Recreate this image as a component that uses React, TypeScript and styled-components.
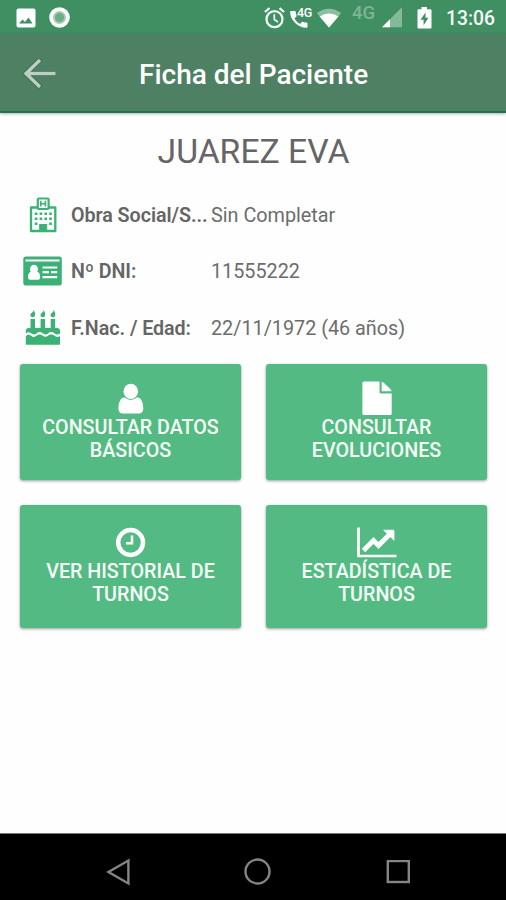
import React from 'react';
import styled, { createGlobalStyle } from 'styled-components';

const GlobalStyle = createGlobalStyle`
  * { box-sizing: border-box; }
  body { margin: 0; background: #fff; font-family: Roboto, "Liberation Sans", sans-serif; }
  svg { display: block; flex: none; }
`;

const Screen = styled.div`
  width: 506px;
  height: 900px;
  display: flex;
  flex-direction: column;
  background: #fefefe;
  overflow: hidden;
`;

const StatusBar = styled.div`
  height: 34px;
  flex: none;
  display: flex;
  align-items: center;
  justify-content: space-between;
  padding: 1px 11px 0 16px;
  background: #3f8f63;
`;

const StatusGroup = styled.div`
  display: flex;
  align-items: center;
`;

const StatusIcon = styled.svg<{ $gap?: number }>`
  margin-left: ${(p) => p.$gap ?? 0}px;
`;

const Network = styled.span`
  width: 24px;
  margin: -9px 0 0 10px;
  font-size: 18.5px;
  line-height: 20px;
  font-weight: 500;
  color: #7db595;
`;

const Clock = styled.span`
  width: 49px;
  margin-left: 14px;
  padding-top: 2px;
  font-size: 19.3px;
  line-height: 24px;
  font-weight: 500;
  white-space: nowrap;
  color: #f4faf6;
`;

const Toolbar = styled.header`
  height: 79px;
  flex: none;
  display: grid;
  grid-template-columns: 139px 1fr;
  align-items: center;
  padding-top: 2px;
  background: #4e8063;
  border-bottom: 2px solid #28704f;
  box-shadow: 0 1px 3px rgba(0, 0, 0, 0.3);
`;

const BackButton = styled.button`
  width: 40px;
  height: 40px;
  margin-left: 20px;
  padding: 0;
  display: grid;
  place-items: center;
  border: 0;
  background: none;
`;

const Title = styled.h1`
  margin: 0;
  padding-top: 2px;
  font-size: 28px;
  line-height: 34px;
  font-weight: 500;
  white-space: nowrap;
  color: #fff;
`;

const Content = styled.main`
  flex: 1;
  padding: 20px 19px 0 20px;
`;

const PatientName = styled.h2`
  margin: 0;
  height: 54px;
  font-size: 33.7px;
  line-height: 38px;
  font-weight: 400;
  text-align: center;
  white-space: nowrap;
  color: #656565;
`;

const Row = styled.div`
  height: 56.3px;
  display: grid;
  grid-template-columns: 45px 136px 1fr;
  column-gap: 5px;
  align-items: center;
`;

const RowIcon = styled.div`
  display: grid;
  place-items: center;
  color: #3cb175;
`;

const Label = styled.span`
  padding: 2px 0 0 1px;
  white-space: nowrap;
  font-size: 19.7px;
  line-height: 26px;
  font-weight: 600;
  letter-spacing: -0.05px;
  color: #656565;
`;

const Value = styled.span`
  padding-top: 2px;
  font-size: 19.8px;
  line-height: 26px;
  white-space: nowrap;
  color: #6c6c6c;
`;

const Actions = styled.div`
  margin-top: 8px;
  display: grid;
  grid-template-columns: 221px 221px;
  grid-template-rows: 116px 123px;
  gap: 25px;
`;

const ActionButton = styled.button<{ $top: number }>`
  padding: ${(p) => p.$top}px 10px 0;
  display: flex;
  flex-direction: column;
  align-items: center;
  justify-content: flex-start;
  border: 0;
  border-radius: 3px;
  background: #54ba83;
  box-shadow: 0 1px 3px rgba(0, 0, 0, 0.4);
  color: #f6fff6;
  font-family: inherit;
  font-size: 19.7px;
  line-height: 23px;
  font-weight: 500;
`;

const NavBar = styled.nav`
  height: 67px;
  flex: none;
  display: flex;
  align-items: center;
  justify-content: space-between;
  padding: 10px 96px 0 106px;
  background: #000;
  border-top: 1px solid #777;
`;

const ImageIcon = () => (
  <StatusIcon width="20" height="20" viewBox="0 0 20 20">
    <rect x=".5" y=".5" width="19" height="19" rx="2" fill="#fff" />
    <path d="M3 15.5 6.5 11.5 9 14 12.5 9.5 16.5 15.5Z" fill="#3f8f63" />
  </StatusIcon>
);

const RecordIcon = () => (
  <StatusIcon $gap={13} width="21" height="21" viewBox="0 0 21 21">
    <circle cx="10.5" cy="10.5" r="10.3" fill="#fff" />
    <circle cx="10.5" cy="10.5" r="6.5" fill="#a3ceb4" />
    <circle cx="10.5" cy="10.5" r="4.6" fill="#6fad88" />
  </StatusIcon>
);

const AlarmIcon = () => (
  <StatusIcon width="21" height="22" viewBox="0 0 21 22" fill="none" stroke="#f4faf6" strokeWidth="2.2">
    <circle cx="10.5" cy="12.2" r="8" />
    <path d="M.9 5 5.5 1.1M15.5 1.1 20.1 5" />
    <path d="M10.3 7.3V12.5L14 15" strokeWidth="1.7" />
  </StatusIcon>
);

const PhoneGlyph = styled.div`
  position: relative;
  margin-left: 5px;
`;

const PhoneBadge = styled.span`
  position: absolute;
  left: 7px;
  top: -2px;
  font-size: 12.5px;
  line-height: 14px;
  font-weight: 500;
  letter-spacing: -0.3px;
  color: #fff;
`;

const CallIcon = () => (
  <PhoneGlyph>
    <svg width="22" height="20" viewBox="0 0 22 20" fill="#fff">
      <path d="M1 3H4.8Q5.7 3 5.8 3.9Q5.9 5.9 6.5 7.6Q6.7 8.3 6.2 8.8L4.4 10.6Q6.5 14.2 10 16L11.8 14.1Q12.3 13.7 13 13.9Q14.7 14.4 16.6 14.5Q17.5 14.6 17.5 15.5V18.7Q17.5 19.7 16.6 19.7Q10 19.7 5.2 14.9Q.1 9.8.1 3.9Q.1 3 1 3Z" />
    </svg>
    <PhoneBadge>4G</PhoneBadge>
  </PhoneGlyph>
);

const WifiIcon = () => (
  <StatusIcon $gap={4} width="26" height="20" viewBox="0 0 26 20">
    <path d="M.8 5Q13-3.5 25.2 5L13 19.5Z" fill="#8ac0a1" />
    <path d="M3.6 8.4Q13 2.4 22.4 8.4L13 19.5Z" fill="#fff" />
  </StatusIcon>
);

const SignalIcon = () => (
  <StatusIcon $gap={6} width="21" height="21" viewBox="0 0 21 21">
    <path d="M0 20.3 20 .3V20.3Z" fill="#83ba9a" />
    <path d="M0 20.3 8 12.3V20.3Z" fill="#fff" />
  </StatusIcon>
);

const BatteryIcon = () => (
  <StatusIcon $gap={14} width="15" height="22" viewBox="0 0 15 22">
    <path d="M4.5 0H10V2.3H13.4Q14.5 2.3 14.5 3.4V20.4Q14.5 21.5 13.4 21.5H1.6Q.5 21.5.5 20.4V3.4Q.5 2.3 1.6 2.3H4.5Z" fill="#fff" />
    <path d="M8.5 5.5 3.5 12.8H6.6V18.2L11.5 10.7H8.5Z" fill="#3f8f63" />
  </StatusIcon>
);

const BackIcon = () => (
  <svg width="36" height="34" viewBox="0 0 36 34" fill="none">
    <path d="M33.5 16.5H4M18.5 2.5 4 16.5 18.5 30.5" stroke="#3c6c50" strokeWidth="5.2" />
    <path d="M33.5 16.5H4M18 3 4 16.5 18 30" stroke="#bccfc2" strokeWidth="3.4" />
  </svg>
);

const HospitalIcon = () => (
  <svg width="28" height="36" viewBox="0 0 28 36" fill="none" stroke="currentColor">
    <path d="M8.5 10.5H2V34H26.3V10.5H19.5" strokeWidth="2.3" strokeLinejoin="round" />
    <rect x="8.8" y="1.5" width="10.8" height="10.5" rx="1" strokeWidth="2.2" />
    <path d="M11.8 3.8V9.6M16.4 3.8V9.6M11.8 6.8H16.4" strokeWidth="1.6" />
    <path d="M5.8 16.7H23M5.8 21.7H23" strokeWidth="2.6" strokeDasharray="2.6 2.2" />
    <path d="M5.8 26.7H8.4M20.2 26.7H22.8" strokeWidth="2.6" />
    <rect x="10.7" y="27.5" width="7" height="6.5" fill="currentColor" strokeWidth="1" />
  </svg>
);

const IdCardIcon = () => (
  <svg width="39" height="30" viewBox="0 0 39 30">
    <rect x=".3" y=".5" width="38.5" height="29" rx="2.5" fill="currentColor" />
    <g fill="#fff">
      <path d="M2.5 3.5H36.5V5.5H2.5Z" />
      <ellipse cx="11" cy="13.2" rx="4" ry="4.5" />
      <path d="M5 22Q5 16.2 8 15.8Q11 18.4 14 15.8Q17.2 16.2 17.2 22Q17 23.8 15 23.8H7.2Q5.2 23.8 5 22Z" />
      <path d="M19.5 10.5H34.2V12.5H19.5ZM19.5 15H26V17.2H19.5ZM28 15H34.2V17.2H28ZM19.5 20H34.2V22.2H19.5Z" />
    </g>
  </svg>
);

const CakeIcon = () => (
  <svg width="36" height="36" viewBox="0 0 36 36" fill="currentColor">
    <path d="M5.5 9H10V18H15.6V9H20.1V18H25.7V9H30.2V18H32Q35 18 35 21V23.5Q32.5 25.8 29.5 23.3Q26 20.8 23 23.5Q20.5 25.5 17.7 23.3Q14.5 20.7 11.5 23.5Q9 25.5 6 23.3Q3.5 21.3.8 23.5V21Q.8 18 4 18H5.5Z" />
    <path d="M.8 26.2Q3.5 23.7 6 25.7Q9 28 11.5 25.8Q14.5 23.1 17.7 25.7Q20.5 27.9 23 25.8Q26 23.3 29.5 25.7Q32.5 27.9 35 26V34.7H.8Z" />
    <path d="M8.5 0Q12 5.2 8.6 7.3Q4.8 7.8 5.5 4.3Q6 3.2 7.2 2.6Q8.4 1.7 8.5 0ZM18.6 0Q22.1 5.2 18.7 7.3Q14.9 7.8 15.6 4.3Q16.1 3.2 17.3 2.6Q18.5 1.7 18.6 0ZM28.7 0Q32.2 5.2 28.8 7.3Q25 7.8 25.7 4.3Q26.2 3.2 27.4 2.6Q28.6 1.7 28.7 0Z" />
  </svg>
);

const UserIcon = () => (
  <svg width="26" height="40" viewBox="0 0 26 40" fill="#fff">
    <ellipse cx="12.8" cy="15.4" rx="7.3" ry="7.6" />
    <path d="M6.3 21.3Q12.8 26.7 19.3 21.3Q25.2 22 25.3 32.7Q25 37.5 20.8 37.5H4.8Q.7 37.5.4 32.7Q.5 22 6.3 21.3Z" />
  </svg>
);

const FileIcon = () => (
  <svg width="30" height="40" viewBox="0 0 30 40" fill="#fff">
    <path d="M2 5.5H17.5V16Q17.5 17.5 19 17.5H29.7V37.5Q29.7 39 28.2 39H2Q.4 39 .4 37.5V7Q.4 5.5 2 5.5Z" />
    <path d="M19.7 5.8Q21 6 22 6.9L28.3 13.1Q29.2 14.1 29.5 15.3H19.7Z" />
  </svg>
);

const ClockIcon = () => (
  <svg width="30" height="40" viewBox="0 0 30 40" fill="none" stroke="#fff">
    <circle cx="14.6" cy="22.5" r="12.4" strokeWidth="4.5" />
    <path d="M16 15.5V23.3H10" strokeWidth="2.5" />
  </svg>
);

const ChartIcon = () => (
  <svg width="40" height="40" viewBox="0 0 40 40" fill="none" stroke="#fff">
    <path d="M1.5 7.5V36H39.5" strokeWidth="2.7" />
    <path d="M6.5 30.5 16.5 20.5 21.5 25.5 32.5 14.5" strokeWidth="4.8" />
    <path d="M26.7 10.2H36.3Q37 10.2 37 11V20.2Z" fill="#fff" strokeWidth=".8" />
  </svg>
);

const patientRows = [
  { icon: <HospitalIcon />, label: 'Obra Social/S...', value: 'Sin Completar' },
  { icon: <IdCardIcon />, label: 'Nº DNI:', value: '11555222' },
  { icon: <CakeIcon />, label: 'F.Nac. / Edad:', value: '22/11/1972 (46 años)' },
];

const actions = [
  { icon: <UserIcon />, lines: ['CONSULTAR DATOS', 'BÁSICOS'], top: 12 },
  { icon: <FileIcon />, lines: ['CONSULTAR', 'EVOLUCIONES'], top: 12 },
  { icon: <ClockIcon />, lines: ['VER HISTORIAL DE', 'TURNOS'], top: 15 },
  { icon: <ChartIcon />, lines: ['ESTADÍSTICA DE', 'TURNOS'], top: 15 },
];

export default function App() {
  return (
    <Screen>
      <GlobalStyle />
      <StatusBar>
        <StatusGroup>
          <ImageIcon />
          <RecordIcon />
        </StatusGroup>
        <StatusGroup>
          <AlarmIcon />
          <CallIcon />
          <WifiIcon />
          <Network>4G</Network>
          <SignalIcon />
          <BatteryIcon />
          <Clock>13:06</Clock>
        </StatusGroup>
      </StatusBar>
      <Toolbar>
        <BackButton aria-label="Volver">
          <BackIcon />
        </BackButton>
        <Title>Ficha del Paciente</Title>
      </Toolbar>
      <Content>
        <PatientName>JUAREZ EVA</PatientName>
        {patientRows.map((row) => (
          <Row key={row.label}>
            <RowIcon>{row.icon}</RowIcon>
            <Label>{row.label}</Label>
            <Value>{row.value}</Value>
          </Row>
        ))}
        <Actions>
          {actions.map((action) => (
            <ActionButton key={action.lines.join(' ')} $top={action.top}>
              {action.icon}
              {action.lines.map((line) => (
                <span key={line}>{line}</span>
              ))}
            </ActionButton>
          ))}
        </Actions>
      </Content>
      <NavBar>
        <svg width="24" height="28" viewBox="0 0 24 28" fill="none" stroke="#858585" strokeWidth="2.4">
          <path d="M22.4 2.5V25.5L2.5 14Z" />
        </svg>
        <svg width="28" height="28" viewBox="0 0 28 28" fill="none" stroke="#858585" strokeWidth="2.4">
          <circle cx="13.5" cy="13.5" r="12" />
        </svg>
        <svg width="24" height="24" viewBox="0 0 24 24" fill="none" stroke="#858585" strokeWidth="2.4">
          <rect x="1.8" y="1" width="21" height="21" />
        </svg>
      </NavBar>
    </Screen>
  );
}
